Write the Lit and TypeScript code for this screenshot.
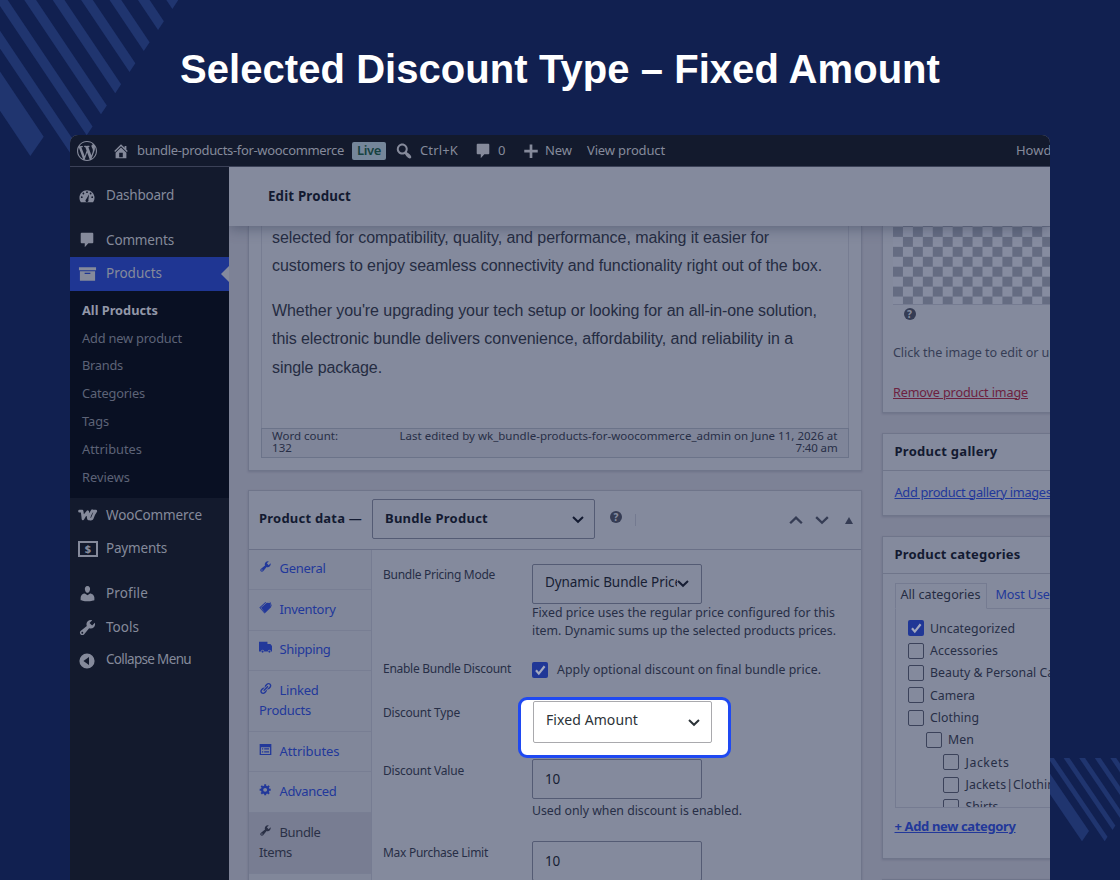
import { LitElement, html, svg, css } from "lit";
import { customElement, property } from "lit/decorators.js";

/* A run of text spaced so that it takes up exactly `w` pixels. */
@customElement("fit-text")
class FitText extends LitElement {
  static styles = css`
    :host { display: inline-block; white-space: pre; flex: none; text-decoration: inherit; }
    .run { display: inline-block; text-decoration: inherit; }
  `;
  @property({ type: Number }) w = 0;
  @property() t = "";
  @property({ type: Number }) spacing = 0;
  render() {
    return html`<span class="run" style="letter-spacing:${this.spacing}px">${this.t}</span>`;
  }
  firstUpdated() {
    const run = this.renderRoot.querySelector(".run") as HTMLElement;
    const natural = run.getBoundingClientRect().width;
    if (this.w && natural) this.spacing = (this.w - natural) / this.t.length;
  }
}

const T = (t: string, w = 0) => html`<fit-text .t=${t} .w=${w}></fit-text>`;

const paths: Record<string, string> = {
  wordpress:
    "M20 10c0-5.51-4.49-10-10-10C4.48 0 0 4.49 0 10c0 5.52 4.48 10 10 10 5.51 0 10-4.48 10-10zM7.78 15.37L4.37 6.22c.55-.02 1.17-.08 1.17-.08.5-.06.44-1.13-.06-1.11 0 0-1.45.11-2.37.11-.18 0-.37 0-.58-.01C4.12 2.69 6.87 1.11 10 1.11c2.33 0 4.45.87 6.05 2.34-.68-.11-1.65.39-1.65 1.58 0 .74.45 1.36.9 2.1.35.61.55 1.36.55 2.46 0 1.49-1.4 5-1.4 5l-3.03-8.37c.54-.02.82-.17.82-.17.5-.05.44-1.25-.06-1.22 0 0-1.44.12-2.38.12-.87 0-2.33-.12-2.33-.12-.5-.03-.56 1.2-.06 1.22l.92.08 1.26 3.41zM17.41 10c.24-.64.74-1.87.43-4.25.7 1.29 1.05 2.71 1.05 4.25 0 3.29-1.73 6.24-4.4 7.78.97-2.59 1.94-5.2 2.92-7.78zM6.1 18.09C3.12 16.65 1.11 13.53 1.11 10c0-1.3.23-2.48.72-3.59C3.25 10.3 4.67 14.2 6.1 18.09zm4.03-6.63l2.58 6.98c-.86.29-1.76.45-2.71.45-.79 0-1.57-.11-2.29-.33.81-2.38 1.62-4.74 2.42-7.1z",
  home: "M16 8.5l1.53 1.53-1.06 1.06L10 4.6l-6.47 6.49-1.06-1.06L10 2.5l4 4v-2h2v4zm-6-2.46l6 5.99V18H4v-5.97zM12 17v-5H8v5h4z",
  search:
    "M12.14 4.18c1.87 1.87 2.11 4.75.72 6.89.12.1.22.21.36.31.2.16.47.36.81.59.34.24.56.39.66.47.42.31.73.57.94.78.32.32.6.65.84 1 .25.35.44.69.59 1.04.14.35.21.68.18 1-.02.32-.14.59-.36.81s-.49.34-.81.36c-.31.02-.65-.04-.99-.19-.35-.14-.7-.34-1.04-.59-.35-.24-.68-.52-1-.84-.21-.21-.47-.52-.77-.93-.1-.13-.25-.35-.47-.66-.22-.32-.4-.57-.56-.78-.16-.2-.29-.35-.44-.5-2.07 1.09-4.69.76-6.44-.98-2.14-2.15-2.14-5.64 0-7.78 2.15-2.15 5.63-2.15 7.78 0zm-1.41 6.36c1.36-1.37 1.36-3.58 0-4.95-1.37-1.37-3.59-1.37-4.95 0-1.37 1.37-1.37 3.58 0 4.95 1.36 1.37 3.58 1.37 4.95 0z",
  comment: "M4 2h12c.6 0 1 .4 1 1v9.500c0 .6-.4 1-1 1h-4.500L7.500 18v-4.500H4c-.6 0-1-.4-1-1V3c0-.6.4-1 1-1z",
  plus: "M17.500 8.700v3h-6v6h-3v-6h-6v-3h6v-6h3v6z",
  dashboard:
    "M3.200 17h13.600A8.400 8.400 0 0 0 18.400 12c0-4.700-3.750-8.500-8.400-8.500S1.600 7.300 1.600 12c0 1.900.6 3.650 1.600 5zM10 4.800a1 1 0 1 1 0 2 1 1 0 0 1 0-2zM6 6.200a1 1 0 1 1 0 2 1 1 0 0 1 0-2zM14 6.200a1 1 0 1 1 0 2 1 1 0 0 1 0-2zM4.200 10.300a1 1 0 1 1 0 2 1 1 0 0 1 0-2zM15.800 10.300a1 1 0 1 1 0 2 1 1 0 0 1 0-2zM12.300 8l-.8 6.200a1.700 1.700 0 1 1-2.400-.7z",
  archive: "M19 3.500v3H1v-3h18zM2 7.500h16v10H2v-10zm11 3V9.300H7v1.200h6z",
  user: "M10 9.250c-2.270 0-2.730-3.440-2.730-3.440C7 4.020 7.820 2 9.970 2c2.160 0 2.980 2.020 2.710 3.810 0 0-.41 3.440-2.680 3.440zm0 2.570L12.720 10c2.390 0 4.520 2.330 4.520 4.530v2.490s-3.650 1.130-7.240 1.130c-3.650 0-7.240-1.130-7.240-1.130v-2.490c0-2.250 1.940-4.480 4.470-4.480z",
  wrench:
    "M16.68 9.77c-1.34 1.34-3.3 1.67-4.95.99l-5.41 6.52c-.99.99-2.59.99-3.58 0s-.99-2.59 0-3.57l6.52-5.42c-.68-1.65-.35-3.61.99-4.95 1.28-1.28 3.12-1.62 4.72-1.06l-2.89 2.89 2.82 2.82 2.86-2.87c.53 1.58.18 3.39-1.08 4.65zM3.81 16.21c.4.39 1.04.39 1.43 0 .4-.4.4-1.04 0-1.43-.39-.4-1.03-.4-1.43 0-.39.39-.39 1.03 0 1.43z",
  gear: "M18 12h-2.18c-.17.7-.44 1.35-.81 1.93l1.54 1.54-2.1 2.1-1.54-1.54c-.58.36-1.23.63-1.91.79V19H8v-2.18c-.68-.16-1.33-.43-1.91-.79l-1.54 1.54-2.12-2.12 1.54-1.54c-.36-.58-.63-1.23-.79-1.91H1V9.03h2.17c.16-.7.44-1.35.8-1.94L2.43 5.55l2.1-2.1 1.54 1.54c.58-.37 1.24-.64 1.93-.81V2h3v2.18c.68.16 1.33.43 1.91.79l1.54-1.54 2.12 2.12-1.54 1.54c.36.59.64 1.24.8 1.94H18V12zm-8.5 1.5c1.66 0 3-1.34 3-3s-1.34-3-3-3-3 1.34-3 3 1.34 3 3 3z",
  link: "M17.74 2.76c1.68 1.69 1.68 4.41 0 6.1l-1.53 1.52c-1.12 1.12-2.7 1.47-4.14 1.09l2.62-2.61.76-.77.76-.76c.84-.84.84-2.2 0-3.04-.84-.85-2.2-.85-3.04 0l-.77.76-3.38 3.38c-.37-1.44-.02-3.02 1.1-4.14l1.52-1.53c1.69-1.68 4.42-1.68 6.1 0zM8.59 13.43l5.34-5.34c.42-.42.42-1.1 0-1.52-.44-.43-1.13-.39-1.53 0l-5.33 5.34c-.42.42-.42 1.1 0 1.52.44.43 1.13.39 1.52 0zm-.76 2.29l4.14-4.15c.38 1.44.03 3.02-1.09 4.14l-1.52 1.53c-1.69 1.68-4.41 1.68-6.1 0-1.68-1.68-1.68-4.42 0-6.1l1.53-1.52c1.12-1.12 2.7-1.47 4.14-1.1l-4.14 4.15c-.85.84-.85 2.2 0 3.05.84.84 2.2.84 3.04 0z",
  truck: "M0 1h13v3.500h4.500L20 7.500V16h-1.500a2.500 2.500 0 0 0-5 0H8a2.500 2.500 0 0 0-5 0H0zM5.500 14.500a1.700 1.700 0 1 1 0 3.400 1.700 1.700 0 0 1 0-3.400zM16 14.500a1.700 1.700 0 1 1 0 3.400 1.700 1.700 0 0 1 0-3.400z",
  list: "M1 1.500h18v17H1zM3 6.500v10.500h14V6.500zM4.500 8h2v2h-2zM8 8h7.500v2H8zM4.500 12.500h2v2h-2zM8 12.500h7.500v2H8z",
  tag: "M.5 10 10 1.500l1 .8L2.300 10.300l7 8.200-.8.700zM3.200 10.500 12 2.500l5.200.6 1.300 6.400-9 9zM14.500 .8l3.500 1 1.500 6-.6 1-1.500-6.600z",
  collapse: "M10 .5a9.500 9.500 0 1 1 0 19 9.500 9.500 0 0 1 0-19zM12.500 5v10L5.500 10z",
};

const icon = (name: string, size: number, cls = "") => html`
  <svg class="icon ${cls}" width=${size} height=${size} viewBox="0 0 20 20">
    <path fill="currentColor" fill-rule="evenodd" d=${paths[name]}></path>
  </svg>`;

const wooIcon = html`
  <svg class="icon" width="20" height="13" viewBox="0 0 20 13">
    <path d="M1.500 2.200h2.600c.4 2.600.6 5 .9 7.600C6.300 7 7.700 4.600 9.700 2.600c.1 2.600.3 5 .8 7.200C11.500 6.600 12.500 4 14.200 1.800M14.600 2.200h3.200c-1.700 2-2.700 4.700-3.700 7.400-1.200.8-2.600.6-3.300-.6" fill="none" stroke="currentColor" stroke-width="2.700" stroke-linejoin="round" stroke-linecap="round"></path>
  </svg>`;

const chevron = (up = false, w = 12, sw = 2) => html`
  <svg class="icon" width=${w} height=${w * 0.6} viewBox="0 0 12 7.200">
    <path d=${up ? "M1 6.200 6 1.400 11 6.200" : "M1 1 6 5.800 11 1"} fill="none" stroke="currentColor" stroke-width=${sw}></path>
  </svg>`;

const check = html`
  <svg class="icon" width="16" height="16" viewBox="0 0 16 16">
    <path d="M4 8.300 6.800 11.600 12.600 4.200" fill="none" stroke="#a3a9bf" stroke-width="2.200"></path>
  </svg>`;

/* One diagonal bar: lowest point, rightmost point, slope. */
const bar = (lx: number, ly: number, rx: number, ry: number, m: number) => {
  const up = 260;
  return svg`<polygon points="${lx},${ly} ${rx},${ry} ${rx - up / m},${ry - up} ${lx - up / m},${ly - up}"></polygon>`;
};

const submenu = [
  ["All Products", 76],
  ["Add new product", 100],
  ["Brands", 41],
  ["Categories", 63],
  ["Tags", 27],
  ["Attributes", 60],
  ["Reviews", 48],
] as const;
const tabs: [string, [string, number][]][] = [
  ["wrench", [["General", 46]]],
  ["tag", [["Inventory", 56]]],
  ["truck", [["Shipping", 51]]],
  ["link", [["Linked", 39], ["Products", 52]]],
  ["list", [["Attributes", 60]]],
  ["gear", [["Advanced", 57]]],
  ["wrench", [["Bundle", 41], ["Items", 33]]],
];
const categories: [string, number, number][] = [
  ["Uncategorized", 85, 0],
  ["Accessories", 68, 0],
  ["Beauty & Personal Care", 136, 0],
  ["Camera", 45, 0],
  ["Clothing", 49, 0],
  ["Men", 26, 1],
  ["Jackets", 44, 2],
  ["Jackets|Clothing", 97, 2],
  ["Shirts", 33, 2],
];

@customElement("app-root")
class AppRoot extends LitElement {
  static styles = css`
    :host {
      display: block; position: relative; width: 1120px; height: 880px; overflow: hidden;
      background: #112050; font-family: "Noto Sans", "Open Sans", sans-serif; font-size: 13px; line-height: 18px; color: #272e46;
    }
    * { box-sizing: border-box; }
    .icon { display: block; flex: none; overflow: visible; }
    .stripes { position: absolute; left: 0; top: 0; fill: #20356f; }
    .title {
      position: relative; height: 135px; display: flex; justify-content: center; align-items: center; padding-top: 4px;
      font: bold 40px "Liberation Sans", Arial, sans-serif; color: #fff;
    }
    .shot {
      position: relative; width: 980px; height: 745px; margin-left: 70px; overflow: hidden;
      border-radius: 8px 8px 0 0; background: #7c8195; display: flex; flex-direction: column;
    }
    .adminbar { height: 32px; flex: none; background: #131a2d; color: #858a9b; display: flex; align-items: center; padding-left: 7px; border-bottom: 1px solid #3b4157; }
    .adminbar > * { flex: none; }
    .adminbar > span { padding-bottom: 2px; }
    .m-home { margin-left: 15px; }
    .m-site { margin-left: 7px; }
    .live { margin-left: 8px; width: 34px; height: 18px; border-radius: 2px; background: #75869a; color: #164140; font-weight: 600; display: flex; justify-content: center; align-items: center; }
    .m-search { margin-left: 8px; }
    .m-key { margin-left: 6px; }
    .m-com { margin-left: 16px; }
    .m-zero { margin-left: 6px; }
    .m-plus { margin-left: 17px; }
    .m-new { margin-left: 5px; }
    .m-view { margin-left: 15px; }
    .m-howdy { margin-left: 351px; }
    .body { flex: 1; display: flex; min-height: 0; }
    .sidebar { width: 158.500px; flex: none; background: #131a2d; color: #858a9b; padding-top: 12px; font-size: 13.500px; }
    .item { height: 33.400px; display: flex; align-items: center; padding-left: 8px; position: relative; }
    .item .ic { width: 28px; flex: none; display: flex; }
    .item fit-text { margin-top: -1px; }
    .low { padding-top: 1px; }
    .low .gap { height: 11.500px; }
    .low .last { height: 32px; }
    .low .last .ic { padding: 3px 0 0 1px; }
    .gap { height: 11px; }
    .active { background: #1f3693; height: 34px; }
    .active::after { content: ""; position: absolute; right: 0; top: 9px; border: 8px solid transparent; border-left: 0; border-right-color: #848a9d; }
    .sub { background: #091023; height: 207px; padding: 5px 0 0 12px; font-size: 12.800px; color: #5d6377; }
    .sub div { height: 27.850px; display: flex; align-items: center; }
    .sub div:first-child { color: #9297a8; font-weight: 700; }
    .dollar { width: 20px; height: 16px; border: 2px solid; display: flex; align-items: center; justify-content: center; font-size: 11px; font-weight: 800; line-height: 10px; }
    .page { flex: 1; min-width: 0; display: flex; flex-direction: column; background: #7d8296; overflow: hidden; }
    .header { height: 59px; flex: none; background: #848a9d; padding: 0 0 2px 39.500px; display: flex; align-items: center; font-size: 13.300px; font-weight: 700; color: #131a31; position: relative; box-shadow: 0 3px 12px rgba(50, 60, 85, 0.45); }
    .columns { flex: 1; min-height: 0; display: flex; gap: 20px; padding-left: 19.500px; overflow: hidden; }
    .main { width: 613.500px; flex: none; }
    .side { width: 260px; flex: none; }
    .card { background: #848a9d; border: 1px solid #6f758a; box-shadow: 0 1px 2px rgba(60, 68, 95, 0.25); }
    .editor { height: 244.500px; border-top: 0; padding: 0 12px; }
    .copy { height: 202px; border: solid #777d92; border-width: 0 1px; padding-left: 10px; font: 16px/28.500px "Liberation Sans", Arial, sans-serif; color: #252c42; display: flow-root; }
    .copy p { margin: -2px 0 0; }
    .copy p + p { margin-top: 16.500px; }
    .copy fit-text { display: block; height: 28.300px; }
    .status { height: 30px; border: 1px solid #6b7389; background: #7f8599; padding: 1px 10px 0; display: flex; justify-content: space-between; font-size: 11.500px; line-height: 12px; }
    .status fit-text { display: block; }
    .right { display: flex; flex-direction: column; align-items: flex-end; }
    .data { margin-top: 19.500px; height: 500px; }
    .data-head { height: 58.500px; border-bottom: 1px solid #6a7087; display: flex; align-items: center; padding: 0 8px 0 10px; color: #131a31; font-weight: 700; }
    .type { margin-left: 10px; margin-top: -2px; width: 223px; height: 40px; border: 1px solid #545b74; border-radius: 2px; display: flex; align-items: center; justify-content: space-between; padding: 0 10px 0 12px; }
    .type .icon { margin-top: 2px; }
    .type fit-text { margin-top: -1px; }
    .data-head > fit-text { margin-top: -3px; }
    .help { width: 12px; height: 12px; border-radius: 50%; background: #353c54; color: #848a9d; font-size: 10px; line-height: 12px; font-weight: 800; text-align: center; }
    .m-help { margin: -5px 0 0 15px; }
    .sep { margin-left: 13px; width: 1px; height: 12px; background: #747a90; }
    .arrows { margin-left: auto; display: flex; align-items: center; color: #353c54; gap: 12px; padding-top: 1px; }
    .tri { border: 4px solid transparent; border-top: 0; border-bottom: 7px solid #353c54; margin-left: 4px; }
    .panel { display: flex; height: 100%; }
    .tabs { width: 123px; flex: none; background: #81879a; border-right: 1px solid #767c92; color: #22389a; line-height: 20px; }
    .tab { min-height: 40.600px; border-bottom: 1px solid #787e93; padding: 8.800px 0 10.800px 10px; }
    .tab.on { background: #787d92; color: #2a3046; }
    .tab .first { display: flex; }
    .tab .ti { width: 20.500px; flex: none; padding-top: 2px; }
    .tab fit-text { display: block; }
    .form { flex: 1; padding-left: 11px; }
    .row { display: flex; }
    .label { width: 149px; flex: none; font-size: 12px; }
    .label fit-text, .desc fit-text { display: block; }
    .r1 { height: 97.500px; } .r1 .label { padding-top: 16.500px; } .r1 .field { margin-top: 14px; }
    .r2 { height: 46px; } .r2 .label { padding-top: 13px; } .r2 .opt { margin-top: 13.500px; }
    .r3 { height: 59px; } .r3 .label { padding-top: 10.500px; } .r3 .ctrl { position: relative; }
    .r4 { height: 82px; } .r4 .label, .r5 .label { padding-top: 10px; } .r4 .field, .r5 .field { margin-top: 7px; }
    .field { width: 169.500px; height: 40px; border: 1px solid #545b74; border-radius: 2px; display: flex; align-items: center; padding: 0 10px 0 12px; color: #171e34; font-size: 13.500px; }
    .clip { width: 132px; overflow: hidden; display: flex; margin-top: -3px; flex: none; }
    .desc { font-size: 12.300px; }
    .r4 .desc { padding-top: 2.500px; }
    .opt { display: flex; align-items: center; gap: 9px; font-size: 12.300px; height: 18px; }
    .box { width: 16px; height: 16px; border: 1.500px solid #3b425a; border-radius: 2px; flex: none; }
    .box.yes { background: #203796; border: 0; }
    .opt .box { margin-top: 1px; }
    .spot { position: absolute; left: -14px; top: 3.500px; width: 213px; height: 61px; border: 3px solid #1f49f2; border-radius: 9px; background: #fff; padding: 1px 0 0 11.500px; }
    .choice { width: 179px; height: 42.500px; border: 1.500px solid #a9a9ad; border-radius: 2px; display: flex; align-items: center; justify-content: space-between; padding: 0 11px 0 12.500px; color: #2c3338; font-size: 14px; }
    .choice fit-text { margin-top: -3px; }
    .choice .icon { margin-top: 1px; }
    .image { height: 187px; border-top: 0; padding-left: 10.500px; }
    .checker { height: 79px; width: 220px; border-bottom: 1px solid #757b91; background: repeating-conic-gradient(#656c82 0 25%, #868ca0 0 50%) 0 -9px / 19.900px 19.900px; }
    .image .help { margin: 3px 0 0 10.500px; }
    .hint { padding-top: 24px; height: 46px; font-size: 12.600px; color: #363d55; }
    .remove { padding-top: 17.500px; font-size: 12.600px; color: #6d2140; text-decoration: underline; }
    .gallery { margin-top: 20px; height: 83px; }
    .cats { margin-top: 20px; height: 323px; }
    .next { margin-top: 20px; height: 80px; }
    .head { height: 37px; border-bottom: 1px solid #6f758a; padding: 0 0 3px 12px; display: flex; align-items: center; font-weight: 700; color: #131a31; }
    .glink { padding: 11.500px 0 0 12px; font-size: 12.800px; color: #22389a; text-decoration: underline; }
    .cattabs { display: flex; padding: 9px 0 0 12px; height: 34px; font-size: 12.600px; color: #252c42; }
    .cattab { width: 92px; height: 26px; border: 1px solid #757b91; border-bottom-color: #848a9d; display: flex; align-items: center; justify-content: center; position: relative; padding-bottom: 2px; }
    .most { margin-left: 9px; height: 24px; display: flex; align-items: center; color: #22389a; }
    .list { margin-left: 12px; width: 300px; height: 200px; overflow: hidden; border: 1px solid #757b91; padding: 8.500px 0 0 12px; font-size: 12.300px; }
    .cat { height: 22.350px; display: flex; align-items: center; gap: 6.500px; }
    .cat .box { margin-top: -1px; }
    .lv1 { padding-left: 18px; } .lv2 { padding-left: 35.500px; }
    .add { padding: 9px 0 0 12px; font-weight: 700; color: #22389a; text-decoration: underline; }
  `;

  render() {
    return html`
      <svg class="stripes" width="1120" height="880">
        ${bar(30.3, 156, 43.7, 136.700, 1.49)}
        ${[0, 1, 2, 3, 4, 5, 6, 7].map((i) => bar(72.4 + 14.28 * i, 156.300 - 21.050 * i, 78.300 + 14.260 * i, 147.500 - 21.050 * i, 1.49))}
        <svg x="1040" y="758" width="80" height="122" viewBox="1040 758 80 122">
          ${bar(1082, 841.300, 1089, 831, 1.47)}
          ${[0, 1, 2, 3, 4, 5].map((i) => bar(1104.7 + 7.850 * i, 841.300 - 11.350 * i, 1107.500 + 7.850 * i, 836.800 - 11.350 * i, 1.47))}
        </svg>
      </svg>
      <div class="title">${T("Selected Discount Type – Fixed Amount", 760)}</div>
      <div class="shot">
        <div class="adminbar">
          ${icon("wordpress", 20)} ${icon("home", 18, "m-home")}
          <span class="m-site">${T("bundle-products-for-woocommerce", 207)}</span>
          <span class="live">${T("Live", 24)}</span>
          ${icon("search", 20, "m-search")}
          <span class="m-key">${T("Ctrl+K", 38)}</span>
          ${icon("comment", 18, "m-com")}<span class="m-zero">${T("0", 7)}</span>
          ${icon("plus", 18, "m-plus")}<span class="m-new">${T("New", 27)}</span>
          <span class="m-view">${T("View product", 78)}</span>
          <span class="m-howdy">${T("Howdy, admin", 87)}</span>
        </div>
        <div class="body">${this.sidebar()}${this.page()}</div>
      </div>`;
  }

  sidebar() {
    const item = (ic: unknown, t: string, w: number, cls = "") =>
      html`<div class="item ${cls}"><span class="ic">${ic}</span>${T(t, w)}</div>`;
    return html`<nav class="sidebar">
      ${item(icon("dashboard", 18), "Dashboard", 68)}
      <div class="gap"></div>
      ${item(icon("comment", 18), "Comments", 68)}
      ${item(icon("archive", 19), "Products", 56, "active")}
      <div class="sub">${submenu.map(([t, w]) => html`<div>${T(t, w)}</div>`)}</div>
      <div class="low">
        ${item(wooIcon, "WooCommerce", 96)}
        ${item(html`<span class="dollar">$</span>`, "Payments", 61)}
        <div class="gap"></div>
        ${item(icon("user", 19), "Profile", 42)}
        ${item(icon("wrench", 19), "Tools", 33)}
        ${item(icon("collapse", 16), "Collapse Menu", 85, "last")}
      </div>
    </nav>`;
  }

  page() {
    return html`<div class="page">
      <div class="header">${T("Edit Product", 83)}</div>
      <div class="columns">
        <div class="main">
          <div class="card editor">
            <div class="copy">
              <p>${T("selected for compatibility, quality, and performance, making it easier for", 497)}
                ${T("customers to enjoy seamless connectivity and functionality right out of the box.", 550)}</p>
              <p>${T("Whether you're upgrading your tech setup or looking for an all-in-one solution,", 545)}
                ${T("this electronic bundle delivers convenience, affordability, and reliability in a", 521)}
                ${T("single package.", 110)}</p>
            </div>
            <div class="status">
              <div>${T("Word count:", 66)}${T("132", 20)}</div>
              <div class="right">${T("Last edited by wk_bundle-products-for-woocommerce_admin on June 11, 2026 at", 438)}${T("7:40 am", 42)}</div>
            </div>
          </div>
          <div class="card data">
            <div class="data-head">
              ${T("Product data —", 103)}
              <div class="type">${T("Bundle Product", 103)}${chevron()}</div>
              <span class="help m-help">?</span><span class="sep"></span>
              <span class="arrows">${chevron(true, 14)}${chevron(false, 14)}<span class="tri"></span></span>
            </div>
            <div class="panel">
              <div class="tabs">
                ${tabs.map(([ic, lines], i) => html`<div class="tab ${i === 6 ? "on" : ""}">
                  <div class="first"><span class="ti">${icon(ic, 13)}</span>${T(lines[0][0], lines[0][1])}</div>
                  ${lines.slice(1).map(([t, w]) => T(t, w))}
                </div>`)}
              </div>
              ${this.form()}
            </div>
          </div>
        </div>
        ${this.side()}
      </div>
    </div>`;
  }

  form() {
    const label = (t: string, w: number) => html`<div class="label">${T(t, w)}</div>`;
    return html`<div class="form">
      <div class="row r1">${label("Bundle Pricing Mode", 112)}
        <div><div class="field"><span class="clip">${T("Dynamic Bundle Price", 137)}</span>${chevron()}</div>
          <div class="desc">${T("Fixed price uses the regular price configured for this", 303)}${T("item. Dynamic sums up the selected products prices.", 304)}</div></div>
      </div>
      <div class="row r2">${label("Enable Bundle Discount", 128)}
        <div class="opt"><span class="box yes">${check}</span>${T("Apply optional discount on final bundle price.", 264)}</div>
      </div>
      <div class="row r3">${label("Discount Type", 77)}
        <div class="ctrl"><div class="spot"><div class="choice">${T("Fixed Amount", 92)}${chevron()}</div></div></div>
      </div>
      <div class="row r4">${label("Discount Value", 81)}
        <div><div class="field">${T("10", 15)}</div><div class="desc">${T("Used only when discount is enabled.", 210)}</div></div>
      </div>
      <div class="row r5">${label("Max Purchase Limit", 105)}<div class="field">${T("10", 15)}</div></div>
    </div>`;
  }

  side() {
    return html`<div class="side">
      <div class="card image">
        <div class="checker"></div>
        <div class="help">?</div>
        <div class="hint">${T("Click the image to edit or update", 190)}</div>
        <div class="remove">${T("Remove product image", 135)}</div>
      </div>
      <div class="card gallery">
        <div class="head">${T("Product gallery", 103)}</div>
        <div class="glink">${T("Add product gallery images", 157)}</div>
      </div>
      <div class="card cats">
        <div class="head">${T("Product categories", 126)}</div>
        <div class="cattabs"><span class="cattab">${T("All categories", 80)}</span><span class="most">${T("Most Used", 62)}</span></div>
        <div class="list">
          ${categories.map(([t, w, lv], i) => html`<div class="cat lv${lv}"><span class="box ${i ? "" : "yes"}">${i ? "" : check}</span>${T(t, w)}</div>`)}
        </div>
        <div class="add">${T("+ Add new category", 121)}</div>
      </div>
      <div class="card next"></div>
    </div>`;
  }
}
